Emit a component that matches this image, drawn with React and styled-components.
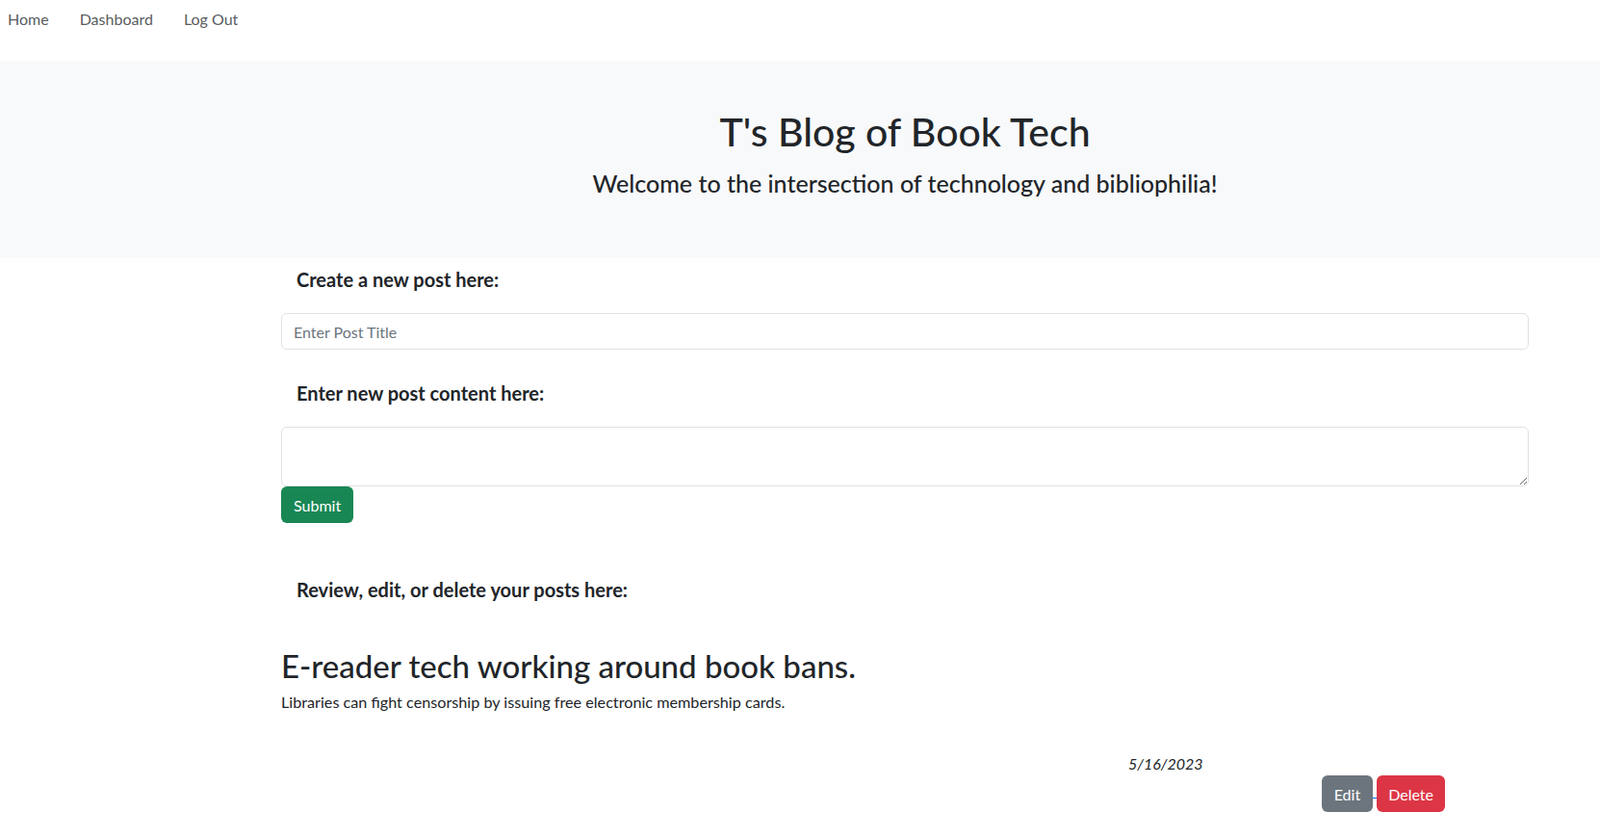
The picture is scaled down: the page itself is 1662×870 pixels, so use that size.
import React from "react";
import styled, { createGlobalStyle } from "styled-components";

const GlobalStyle = createGlobalStyle`
  body {
    margin: 0;
    background: #fff;
    color: #212529;
    font-family: Lato, "Open Sans", sans-serif;
    font-size: 16px;
    line-height: 1.5;
  }
  * {
    box-sizing: border-box;
  }
`;

const Nav = styled.nav`
  height: 64px;
  padding-top: 8px;
  display: flex;
  align-items: flex-start;
  gap: 16px;
`;

const NavLink = styled.a`
  padding: 0 8px;
  color: #595c5f;
  text-decoration: none;
  font-size: 16px;
  line-height: 24px;
  cursor: pointer;
`;

const Jumbotron = styled.header`
  background: #f8f9fa;
  padding: 49px 0 63px;
`;

const Container = styled.div`
  width: 1296px;
  margin-left: 292px;
`;

const SiteTitle = styled.h1`
  margin: 0 0 15px;
  text-align: center;
  font-size: 41px;
  font-weight: 500;
  line-height: 48px;
`;

const Tagline = styled.h4`
  margin: 0;
  text-align: center;
  font-size: 25px;
  font-weight: 500;
  line-height: 29px;
`;

const SectionLabel = styled.h5`
  margin: ${(p) => p.$top || 0}px 0 ${(p) => p.$bottom || 0}px;
  padding-left: 16px;
  font-size: 20px;
  font-weight: 700;
  line-height: 24px;
`;

const fieldStyles = `
  display: block;
  width: 100%;
  padding: 6px 12px;
  font-family: Lato, "Open Sans", sans-serif;
  font-size: 16px;
  line-height: 24px;
  color: #212529;
  background: #fff;
  border: 1px solid #dee2e6;
  border-radius: 6px;
  outline: none;
  &::placeholder {
    color: #6c757d;
  }
`;

const TitleInput = styled.input`
  ${fieldStyles}
  height: 38px;
`;

const ContentArea = styled.textarea`
  ${fieldStyles}
  height: 62px;
  resize: vertical;
`;

const Button = styled.button`
  display: inline-block;
  height: 38px;
  padding: 0 ${(p) => p.$px || 12}px;
  border: 0;
  border-radius: 6px;
  font-family: Lato, "Open Sans", sans-serif;
  font-size: 16px;
  color: #fff;
  background: ${(p) => p.$bg};
  cursor: pointer;
`;

const PostTitle = styled.h2`
  margin: 48px 0 7px;
  font-size: 33px;
  font-weight: 500;
  line-height: 38px;
`;

const PostBody = styled.p`
  margin: 0;
  font-size: 16.2px;
  line-height: 24px;
`;

const PostDate = styled.div`
  margin-top: 40px;
  padding-left: 880px;
  font-style: italic;
  line-height: 24px;
`;

const Actions = styled.div`
  display: flex;
  justify-content: flex-end;
  align-items: center;
  padding-right: 87px;
`;

const Spacer = styled.span`
  width: 4px;
  height: 1px;
  margin-top: 8px;
  background: #0d6efd;
`;

export default function App() {
  return (
    <>
      <GlobalStyle />
      <Nav>
        <NavLink>Home</NavLink>
        <NavLink>Dashboard</NavLink>
        <NavLink>Log Out</NavLink>
      </Nav>
      <Jumbotron>
        <Container>
          <SiteTitle>T's Blog of Book Tech</SiteTitle>
          <Tagline>Welcome to the intersection of technology and bibliophilia!</Tagline>
        </Container>
      </Jumbotron>
      <Container>
        <SectionLabel $top={10} $bottom={23}>Create a new post here:</SectionLabel>
        <TitleInput placeholder="Enter Post Title" />
        <SectionLabel $top={33} $bottom={23}>Enter new post content here:</SectionLabel>
        <ContentArea />
        <Button $bg="#198754" $px={13}>Submit</Button>
        <SectionLabel $top={57}>Review, edit, or delete your posts here:</SectionLabel>
        <PostTitle>E-reader tech working around book bans.</PostTitle>
        <PostBody>Libraries can fight censorship by issuing free electronic membership cards.</PostBody>
        <PostDate>5/16/2023</PostDate>
        <Actions>
          <Button $bg="#6c757d" $px={13}>Edit</Button>
          <Spacer />
          <Button $bg="#dc3545">Delete</Button>
        </Actions>
      </Container>
    </>
  );
}
